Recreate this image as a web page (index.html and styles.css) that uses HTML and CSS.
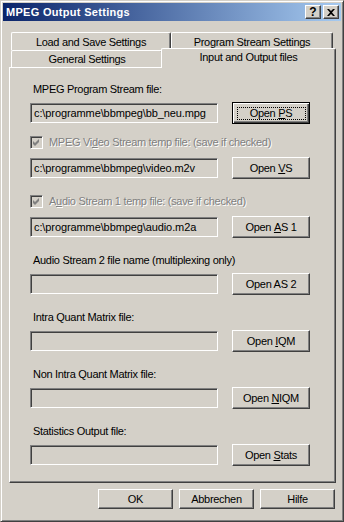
FILE: index.html
```html
<html>
<head>
<title>MPEG Output Settings</title>
<link rel="stylesheet" href="styles.css">
</head>
<body>

<div class="window">
	<div class="titlebar">
		<span class="titletext">MPEG Output Settings</span>
		<div class="capbtn capbtn_help">?</div>
		<div class="capbtn capbtn_close">
			<svg width="8" height="7" viewBox="0 0 8 7"><path d="M0 0h2l2 2 2-2h2L5 3.5 8 7H6L4 5 2 7H0l3-3.5z" fill="#000"/></svg>
		</div>
	</div>

	<div class="client">
		<div class="tabrow">
			<div class="tab tab_load">Load and Save Settings</div>
			<div class="tab tab_prog">Program Stream Settings</div>
		</div>
		<div class="tabrow tabrow_front">
			<div class="tab tab_gen">General Settings</div>
			<div class="tab tab_sel">Input and Output files</div>
		</div>

		<div class="panel">
			<div class="group">
				<div class="caption">MPEG Program Stream file:</div>
				<div class="filerow">
					<div class="edit">c:\programme\bbmpeg\bb_neu.mpg</div>
					<div class="btn btn_default">Open <u>P</u>S</div>
				</div>
			</div>

			<div class="group group_check1">
				<div class="check">
					<span class="checkbox"><svg width="11" height="11" viewBox="0 0 11 11"><path d="M2 4l2 2 4-4v3l-4 4-2-2z" fill="#808080"/></svg></span>
					<span class="disabled">MPEG Vi<u>d</u>eo Stream temp file: (save if checked)</span>
				</div>
				<div class="filerow">
					<div class="edit">c:\programme\bbmpeg\video.m2v</div>
					<div class="btn">Open <u>V</u>S</div>
				</div>
			</div>

			<div class="group">
				<div class="check">
					<span class="checkbox"><svg width="11" height="11" viewBox="0 0 11 11"><path d="M2 4l2 2 4-4v3l-4 4-2-2z" fill="#808080"/></svg></span>
					<span class="disabled">A<u>u</u>dio Stream 1 temp file: (save if checked)</span>
				</div>
				<div class="filerow">
					<div class="edit">c:\programme\bbmpeg\audio.m2a</div>
					<div class="btn">Open <u>A</u>S 1</div>
				</div>
			</div>

			<div class="group">
				<div class="caption">Audio Stream 2 file name (multiplexing only)</div>
				<div class="filerow">
					<div class="edit"></div>
					<div class="btn">Open AS 2</div>
				</div>
			</div>

			<div class="group">
				<div class="caption">Intra Quant Matrix file:</div>
				<div class="filerow">
					<div class="edit"></div>
					<div class="btn">Open <u>I</u>QM</div>
				</div>
			</div>

			<div class="group">
				<div class="caption">Non Intra Quant Matrix file:</div>
				<div class="filerow">
					<div class="edit"></div>
					<div class="btn">Open <u>N</u>IQM</div>
				</div>
			</div>

			<div class="group">
				<div class="caption">Statistics Output file:</div>
				<div class="filerow">
					<div class="edit"></div>
					<div class="btn">Open <u>S</u>tats</div>
				</div>
			</div>
		</div>

		<div class="dlgbuttons">
			<div class="btn btn_dlg">OK</div>
			<div class="btn btn_dlg">Abbrechen</div>
			<div class="btn btn_dlg">Hilfe</div>
		</div>
	</div>
</div>

</body>
</html>
```

FILE: styles.css
```css
body { margin: 0; background-color: #d4d0c8; }

.window {
	width: 344px; height: 522px; box-sizing: border-box;
	border: 1px solid; border-color: #d4d0c8 #404040 #404040 #d4d0c8;
	box-shadow: inset 1px 1px #fff, inset -1px -1px #808080;
	padding: 2px;
	background-color: #d4d0c8;
	font-family: "Liberation Sans", Arial, sans-serif; font-size: 11px; letter-spacing: -0.3px;
	color: #000;
}

/* caption bar */
.titlebar {
	height: 18px; display: flex; align-items: center;
	background: linear-gradient(to right, #0a246a, #a6caf0);
	padding: 0 2px 0 3px;
}
.titletext { flex: 1; color: #fff; font-weight: bold; font-size: 11px; letter-spacing: 0.3px; }
.capbtn {
	width: 16px; height: 14px; box-sizing: border-box;
	border: 1px solid; border-color: #fff #404040 #404040 #fff;
	box-shadow: inset -1px -1px #808080;
	background-color: #d4d0c8;
	display: flex; align-items: center; justify-content: center;
	font-weight: bold; font-size: 12px; letter-spacing: 0;
}
.capbtn_help { margin-right: 2px; }

.client { padding: 0 5px 0 6px; }

/* tabs */
.tabrow { display: flex; padding-left: 2px; height: 18px; }
.tabrow:first-child { margin-top: 11px; }
.tabrow_front { height: 17px; }
.tab {
	box-sizing: border-box; height: 18px;
	border: 1px solid; border-bottom: none;
	border-color: #fff #404040 #fff #fff;
	border-radius: 2px 2px 0 0;
	box-shadow: inset -1px 0 #808080;
	display: flex; align-items: center; justify-content: center;
}
.tab_load { width: 160px; }
.tab_prog { width: 162px; }
.tab_gen { width: 152px; height: 17px; }
.tab_sel {
	width: 175px; height: 20px; margin-top: -2px; margin-left: -2px;
	padding-bottom: 3px;
	position: relative; z-index: 1; background-color: #d4d0c8;
}

.panel {
	height: 416px; box-sizing: border-box;
	border: 1px solid; border-color: #fff #404040 #404040 #fff;
	box-shadow: inset -1px -1px #808080;
	padding: 15px 0 0 20px;
}

.group { margin-top: 16px; }
.group:first-child { margin-top: 0; }
.group_check1 { margin-top: 12px; }
.caption { height: 13px; line-height: 13px; margin-bottom: 6px; padding-left: 3px; }
.check { height: 13px; line-height: 13px; display: flex; align-items: center; margin-bottom: 8px; }
.checkbox {
	width: 13px; height: 13px; box-sizing: border-box; margin-right: 6px;
	border: 1px solid; border-color: #808080 #fff #fff #808080;
	box-shadow: inset 1px 1px #404040, inset -1px -1px #d4d0c8;
	display: flex;
}
.disabled { color: #808080; text-shadow: 1px 1px #fff; }

.filerow { display: flex; align-items: center; height: 22px; }
.edit {
	width: 188px; height: 20px; box-sizing: border-box;
	border: 1px solid; border-color: #808080 #fff #fff #808080;
	box-shadow: inset 1px 1px #404040, inset -1px -1px #d4d0c8;
	padding: 0 3px; line-height: 18px; white-space: nowrap; overflow: hidden;
	letter-spacing: -0.1px;
	margin-right: 14px;
}
.btn {
	width: 78px; height: 22px; box-sizing: border-box;
	border: 1px solid; border-color: #fff #404040 #404040 #fff;
	box-shadow: inset -1px -1px #808080;
	display: flex; align-items: center; justify-content: center;
	white-space: pre;
}
.btn_default {
	position: relative;
	border-color: #000;
	box-shadow: inset 1px 1px #fff, inset -1px -1px #404040, inset -2px -2px #808080;
}
.btn_default::after {
	content: ""; position: absolute; left: 4px; right: 3px; top: 4px; bottom: 3px;
	border: 1px dotted #000;
}

.dlgbuttons { display: flex; justify-content: flex-end; gap: 6px; margin-top: 6px; padding-right: 1px; }
.btn_dlg { width: 75px; height: 20px; }
```
